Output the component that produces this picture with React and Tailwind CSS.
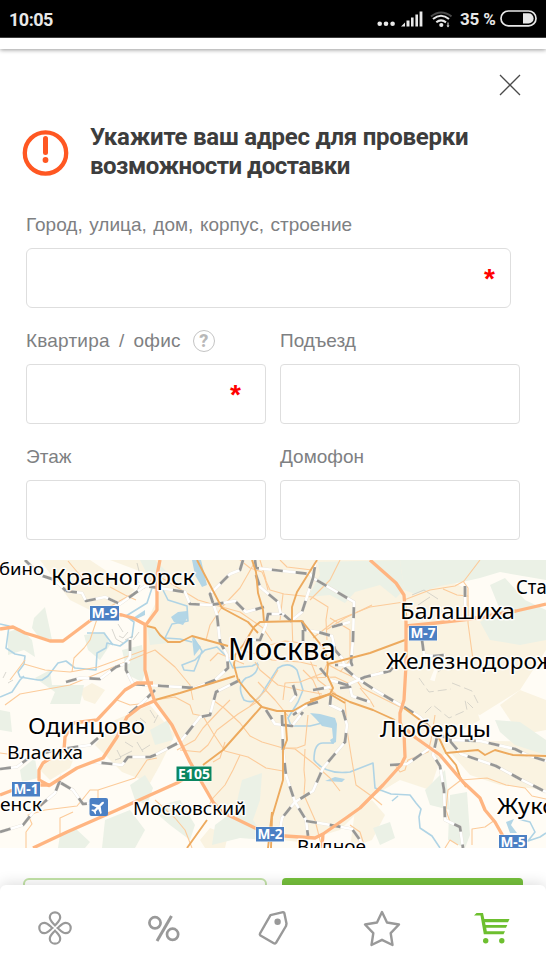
import React from "react";

const cityAreas = [
  "M110 560H405L440 575L468 590L472 640L440 655L430 680L470 690L480 720L462 730L440 760L430 790L400 780L375 795L340 830L300 842L262 838L240 825L215 805L195 775L180 745L158 705L148 690L145 625L157 600L150 575Z",
  "M40 560H90L135 590L100 615L70 600Z",
  "M450 610H546V650L520 690L480 715L430 700L440 660Z",
  "M95 745L115 720L150 705L175 735L160 765L150 783L122 772Z",
  "M440 740L546 742V790L500 785L470 775Z",
  "M80 690L92 683L105 690L95 704L84 700Z",
  "M500 705L520 690L546 700V730L520 735Z",
  "M355 810L372 800L385 815L372 840L350 848Z",
  "M200 840L210 828L228 835L225 848H205Z",
  "M38 768L52 760L75 755L70 768L50 780Z",
];

const greenAreas = [
  "M320 575L318 562L400 560L404 590L396 598L380 585L355 592L345 603L330 595L308 597Z",
  "M400 560H546V580L500 572L480 578L462 582L440 586L415 594L404 590Z",
  "M490 585L505 578L525 600L546 610V640L520 645L490 640L480 622L500 610Z",
  "M34 618L45 607L50 630L52 640L38 636L32 628Z",
  "M8 632L20 628L32 640L35 657L24 650L8 655Z",
  "M84 635L105 632L110 645L100 660L88 650Z",
  "M122 650L142 645L146 670L142 682L128 675Z",
  "M147 627L160 632L168 643L150 645Z",
  "M35 678L50 670L52 685L84 685L80 704H50L55 692Z",
  "M140 560H155L170 575L150 585L145 570Z",
  "M0 710L10 712L12 732L0 730Z",
  "M20 770L35 758L38 778L22 782Z",
  "M150 730L168 720L173 740L155 745Z",
  "M130 785L145 775L153 788L147 805L135 800Z",
  "M105 820L130 810L145 830L135 848H102Z",
  "M150 808L180 800L195 825L190 840L170 825Z",
  "M242 780L262 773L260 800L253 820L266 840L240 838L212 845L215 825L235 810Z",
  "M495 720L520 722L546 740V755L515 745L500 732Z",
  "M425 790L445 770L450 810L430 805Z",
  "M450 795L467 792L470 835L465 848L448 840Z",
  "M373 828L390 822L395 838L380 845Z",
  "M60 835L75 828L90 842L85 848H58Z",
];

const waterAreas = [
  "M192 560H201L207 585L202 587L195 575Z",
  "M171 617L178 612L187 611L188 617L183 625L174 622Z",
  "M192 638L201 647L194 656Z",
  "M130 620L145 610L145 615L132 621Z",
  "M310 713L320 714L335 718L337 724L336 742L332 744L330 740L333 738L332 728L322 726L316 719Z",
  "M325 781L335 777L345 779L342 782Z",
  "M506 822L514 819L511 825L517 833L510 833Z",
];

const rivers = [
  "M0 624L9 626L6 648L15 654L25 656L24 664L18 672L20 677L38 680L42 680L48 676L58 663L66 661L75 668L96 670L97 653L106 648L107 643L120 646L132 637L134 622L126 616L147 603L152 588L162 588L168 600L187 606L188 621L172 624L165 638L180 639L192 642",
  "M193 637L202 651L194 671L184 670L182 665L195 660L205 650L217 647L228 658L233 668L252 666L258 663",
  "M0 697L12 692L20 680L24 676M87 633H104L113 645",
  "M258 664Q258 675 246 678Q236 685 244 700Q256 706 264 690L278 668Q289 661 297 670L303 690L298 702L288 718L291 726L310 726L322 723",
  "M334 743L324 743Q314 742 314 760Q325 775 350 772L373 763L375 788L391 794L410 795L416 803L421 809L419 817L420 828L432 836L440 848",
  "M392 801L398 796M518 819L530 822L535 832L528 841L540 837L546 833",
];

const minorRoads = [
  "M5 705L20 694L70 685L140 656L155 650L175 667L190 685L193 700",
  "M10 680L25 660M24 664L45 670L70 672L98 667L145 650",
  "M72 672L74 658L84 648L90 640L99 613L130 595L146 587L155 575",
  "M110 587L125 595L136 600M68 561L84 580L100 583",
  "M157 575L198 600L222 607L240 588L256 560",
  "M206 640L210 625L222 607M222 607L240 612L263 628L272 641",
  "M240 560L250 568L262 572L270 590L284 594L312 597L328 607L326 620L327 640",
  "M283 594L280 620M264 575L268 590M340 560L330 580L310 600",
  "M260 560L266 580M292 621L293 650M313 638L335 621L370 607L404 602",
  "M280 560L287 567L312 570M326 630L345 618L372 605",
  "M155 700L175 697L190 705L193 714L203 716L213 733L225 751L248 757L266 768L283 771",
  "M213 700L224 708L240 723L250 736L262 742L283 748L295 749L313 763L330 778L340 791",
  "M177 750L195 740L203 728L220 710L230 700",
  "M180 750L200 752L208 745L217 730L238 714L260 700",
  "M240 755L233 770L225 785L213 798L208 807",
  "M255 662L260 670L278 685L300 690L322 694",
  "M240 650L260 655L272 660L300 662L317 666",
  "M270 645L285 641L310 644L318 655",
  "M258 682L275 700L288 716M250 706L266 690L278 670M303 670L313 680L321 698",
  "M283 700L285 683L300 682L323 673L327 664",
  "M327 664L338 670L355 678L362 688L380 697L400 707",
  "M340 672L350 660L350 630L330 618M310 678L335 677L350 684L380 672",
  "M360 688L370 700L374 707M336 694L318 680L310 660",
  "M345 700L347 730L351 755L356 785L370 795L382 805",
  "M305 749L304 770L305 780L304 795L315 820L322 848M283 748H297L305 745L308 715",
  "M395 765L400 772L405 770L408 760L428 752L431 740L435 715",
  "M404 600L430 590L455 586L464 581L480 560M443 589L457 595L468 596L468 588L463 581",
  "M468 596L468 623L473 660",
  "M461 780L487 778L506 785L525 788L532 796L546 799",
  "M461 780L448 790L446 810L450 822M445 848L450 840L458 845M472 845V829L485 827L495 820",
  "M26 848L26 832L32 824L28 815L45 810L77 806L82 800L90 790H98L135 778L147 760L157 758",
  "M60 834L60 818L73 812M98 790V800L108 812M155 800L175 818L185 830L192 848",
  "M0 753L15 755L28 750M117 700L130 705L148 703",
  "M225 742L220 758L213 762M350 825L360 832L365 848",
  "M210 661L218 653L244 664",
];

const secondaryRoads = [
  "M197 560L222 608L248 622L258 633",
  "M244 644L254 627L260 622L302 621L313 635L325 650L328 665L327 675L333 688L330 694L305 704L293 711L277 711L262 707L250 695L238 680L234 665L235 655L244 644",
  "M252 560L256 572L258 593L263 610L264 622",
  "M317 560L297 592L292 607L292 621",
  "M147 626L155 628L160 635L168 642H180L192 636L228 646",
  "M155 700L180 693L235 676",
  "M328 664L370 653L405 640",
  "M332 693L350 702L373 710L395 720",
  "M404 708L420 720L431 728L440 740L446 753L478 750L485 755L495 750L513 755L546 756",
  "M446 753L456 765L460 777L466 787",
  "M262 706L247 723L223 750L203 765",
  "M285 712L287 740L283 750L283 780L272 817L271 848",
  "M207 820L187 848M272 812L268 848",
  "M310 700L330 694L345 703",
];

const highways = [
  "M0 629L13 627L25 633L35 636L50 641H63L91 620L104 613L122 615L133 618L146 625",
  "M160 560L157 575V610L145 626V670L148 682L155 702L172 725L190 762L213 802L222 812L255 828L270 835L285 836L315 838L323 834L346 818L360 808L383 785L401 765L405 757L404 733L400 722V713L404 700L406 665V622L404 595L396 583L370 560",
  "M406 626L436 623L470 619L516 611L546 604",
  "M153 683H137L125 690L113 703L97 720L73 723L65 737L64 750L43 763L39 770V780L50 786",
  "M0 795L13 790L40 785H50L77 768L103 758L117 737L127 717L140 707L154 701",
  "M33 848L67 832L117 810L177 783L195 772",
  "M407 730L416 738L440 755L463 782L480 798L485 810L495 822L508 845",
  "M323 834L322 848",
];

const railways = [
  "M66 591L82 593L86 601L105 597L120 604L145 586L160 588L185 592L190 604L210 605L235 601L246 612L264 607",
  "M25 560L40 575L55 580L66 591",
  "M243 560L240 570L230 574L210 594L217 615L220 642L227 655L228 668L215 680L195 688L162 686L133 684L126 670V662L130 657V638",
  "M240 680L216 692L210 715L200 717L180 742L155 755L150 757H128L122 765L93 762",
  "M66 682L80 678L100 679L116 667L130 662",
  "M255 560L256 568L310 574L313 578L354 602L353 640L351 662L352 665L335 665",
  "M313 578L316 560M313 578L302 612L291 621L283 614H268L266 625L260 640L250 640",
  "M256 575L260 587L278 602L281 615",
  "M302 621L305 630L318 632L332 636L335 650L342 658L345 668L355 677L375 690L402 706",
  "M303 630V642M332 627L350 622M320 668L330 680L347 685L365 677L390 671L395 665",
  "M340 688L350 687L352 696L370 702M313 690L330 687M293 685L296 695L290 702",
  "M331 694L330 705L343 711L347 725L345 742L334 755L323 768L313 791L295 802L282 818L280 830",
  "M266 710L275 724L292 726L303 712M282 715L283 750L286 775L295 802L306 820L308 836",
  "M306 821L325 824L352 829L360 840L364 848",
  "M404 707L420 717L432 730L450 740L480 741L515 749L527 755L546 761M450 741L461 754L496 766L520 779L546 792",
  "M437 737L433 755L440 766L444 790L445 820L460 827L463 848",
  "M390 765L407 764L430 748M318 702L307 705L293 715",
  "M0 769L17 767L30 757L55 750L90 745L98 738",
  "M0 832L23 825L35 810L55 793L62 775M61 783L73 790L83 804L92 803",
  "M155 690L143 702L128 715M422 640L424 655L433 656L445 655M465 586V610",
];

const mapLabels = [
  { t: "бино", x: -1, y: 575, s: 17, w: 45 },
  { t: "Красногорск", x: 51, y: 584.5, s: 22, w: 144 },
  { t: "Москва", x: 228, y: 660, s: 30, w: 108 },
  { t: "Балашиха", x: 400, y: 619, s: 22, w: 115 },
  { t: "Железнодорожный", x: 386, y: 669, s: 22, w: 213 },
  { t: "Старая", x: 516, y: 594, s: 19, w: 63 },
  { t: "Одинцово", x: 28, y: 734, s: 22, w: 117 },
  { t: "Власиха", x: 7, y: 759, s: 18, w: 76 },
  { t: "енск", x: 0, y: 811, s: 18, w: 42 },
  { t: "Московский", x: 133, y: 815, s: 18, w: 113 },
  { t: "Люберцы", x: 380, y: 737, s: 22, w: 111 },
  { t: "Жуковский", x: 497, y: 814, s: 22, w: 126 },
  { t: "Видное", x: 297, y: 853, s: 18, w: 69 },
];

const roadShields = [
  { t: "М-9", x: 90, y: 606, w: 29 },
  { t: "М-7", x: 409, y: 626, w: 28 },
  { t: "М-1", x: 12, y: 782, w: 28 },
  { t: "М-2", x: 256, y: 827, w: 28 },
  { t: "М-5", x: 499, y: 835, w: 28 },
  { t: "E105", x: 176.5, y: 766.5, w: 35, green: true },
];

function Strokes({ paths, color, width, dash }) {
  return (
    <g fill="none" stroke={color} strokeWidth={width} strokeDasharray={dash} strokeLinejoin="round">
      {paths.map((d) => (
        <path key={d} d={d} />
      ))}
    </g>
  );
}

function CityMap() {
  return (
    <svg className="block h-[288px] w-full shrink-0" viewBox="0 560 546 288">
      <rect x="0" y="560" width="546" height="288" fill="#fffcf5" />
      <g fill="#faf3e1">{cityAreas.map((d) => <path key={d} d={d} />)}</g>
      <g fill="#ebf1e6">{greenAreas.map((d) => <path key={d} d={d} />)}</g>
      <g fill="#b3d6e6">{waterAreas.map((d) => <path key={d} d={d} />)}</g>
      <Strokes paths={rivers} color="#b0d4e5" width="1.6" />
      <g fill="none" stroke="#c9c7c0" strokeWidth="0.7">
        <path d="M112 629l4 10l7 4M118 624l5 8M128 632l-5 6l-4-2M125 640l8-4M133 640l6-8M135 575l4 8M140 585l-5 9M137 563l3 12M3 678l3-6M8 683l5-3" />
        <path d="M125 742l8 5M137 742l6 10M150 745l-8 5M117 750l4 8l-6 2M132 725l5-5M140 718l6 5M150 710l5 8M158 715l-4 8M120 757l12-6" />
        <path strokeDasharray="9 4" d="M419 678l10 14l22-3M438 672l15-11M452 683l20 8l6 12M425 713l8-8l16 13l18-8l-2-10l8 8" />
        <path d="M412 595l12-5l14 9M418 605l12-8" />
      </g>
      <Strokes paths={minorRoads} color="#fccb9a" width="1.1" />
      <Strokes paths={railways} color="#e7e2d9" width="3.2" />
      <Strokes paths={railways} color="#ffffff" width="2.5" />
      <Strokes paths={railways} color="#979795" width="2.7" dash="11 13" />
      <Strokes paths={secondaryRoads} color="#edaa5e" width="1.9" />
      <Strokes paths={highways} color="#ffb581" width="3.3" />
      <g fontFamily="'Noto Sans', sans-serif" fill="#000" stroke="#fff" strokeOpacity="0.85" strokeWidth="3" strokeLinejoin="round" style={{ paintOrder: "stroke" }}>
        {mapLabels.map((l) => (
          <text key={l.t} x={l.x} y={l.y} fontSize={l.s} textLength={l.w} lengthAdjust="spacingAndGlyphs">
            {l.t}
          </text>
        ))}
      </g>
      {roadShields.map((r) => (
        <g key={r.t}>
          <rect x={r.x - 0.5} y={r.y - 0.5} width={r.w + 1} height="15.5" fill="#fff" fillOpacity="0.8" />
          <rect x={r.x} y={r.y} width={r.w} height="14.5" fill={r.green ? "#0b8660" : "#4b80c4"} />
          <text x={r.x + 1.5} y={r.y + 12} fontSize="13.5" fontWeight="700" fill="#fff" fontFamily="'Noto Sans', sans-serif" textLength={r.w - 3} lengthAdjust="spacingAndGlyphs">
            {r.t}
          </text>
        </g>
      ))}
      <rect x="89.5" y="798" width="18.5" height="18" rx="2" fill="#4b80c4" />
      <path
        transform="translate(98.6 807) rotate(45) scale(.72)"
        fill="#fff"
        d="M0-10C1.3-10 1.6-8.5 1.6-7V-2.5L9 3V5L1.6 2.5V7L4 9V10.5L0 9.5L-4 10.5V9L-1.6 7V2.5L-9 5V3L-1.6-2.5V-7C-1.6-8.5-1.3-10 0-10Z"
      />
    </svg>
  );
}

function StatusBar() {
  return (
    <div className="flex h-[38px] shrink-0 items-center justify-between border-b border-[#444] bg-black pl-[9px] pr-[9px] text-[#e8e8e8]">
      <span className="mt-[2px] font-[Roboto] text-[18px] font-bold leading-none tracking-[-0.5px]">10:05</span>
      <div className="flex items-center">
        <svg className="h-[38px] w-[76px]" viewBox="376 0 76 38" fill="#e8e8e8">
          <circle cx="379.7" cy="23.8" r="2.3" />
          <circle cx="386" cy="23.8" r="2.3" />
          <circle cx="392.6" cy="23.8" r="2.3" />
          <path d="M401 26.5L405 22.5V26.5ZM406.5 20.5H409.5V26.5H406.5ZM411 17.5H413.6V26.5H411ZM415.4 14.5H418V26.5H415.4ZM419.6 11.5H422.4V26.5H419.6Z" />
          <g fill="none" strokeWidth="2.1">
            <path d="M431 16.5Q441 8.5 451.500 16.500" stroke="#4a4a4a" />
            <path d="M433 19Q441 12.500 449 19" stroke="#e8e8e8" />
            <path d="M436.300 22.300Q441 18.500 446 22.300" stroke="#e8e8e8" />
          </g>
          <circle cx="441.300" cy="25" r="2.100" />
          <path d="M447.500 22.500H448.500V25.500H449.500L448 27.500L446.500 25.500H447.500Z" />
        </svg>
        <span className="ml-[8px] mt-0.5 w-[37px] whitespace-nowrap font-[Roboto] text-[17px] font-bold leading-none tracking-[-0.2px]">35 %</span>
        <svg className="ml-[3px] h-[38px] w-[37px]" viewBox="500 0 37 38">
          <rect x="501" y="11" width="35" height="14.800" rx="7.400" fill="none" stroke="#e8e8e8" strokeWidth="1.700" />
          <path d="M523 13.300H528.500A5 5 0 0 1 528.500 23.500H523Z" fill="#e8e8e8" />
        </svg>
      </div>
    </div>
  );
}

function Field({ label, help, required, className, labelClass, boxClass }) {
  return (
    <label className={className}>
      <span className="flex h-8 items-center font-['Liberation_Sans'] text-[19px] leading-8 text-[#7e8082]">
        <span className={`mt-0.5 ${labelClass ?? ""}`}>{label}</span>
        {help && (
          <span className="ml-3 mt-px flex size-[22px] items-center justify-center rounded-full border-[1.5px] border-[#c4c4c4] font-[Roboto] text-[18px] font-extrabold leading-none text-[#b8b8b8]">?</span>
        )}
      </span>
      <span className={`mt-2 flex h-[60px] items-center justify-end border border-[#dedede] bg-white font-['Liberation_Sans'] text-[28px] font-bold leading-none text-[#f00] ${boxClass}`}>
        {required && <span className="mt-[2px]">*</span>}
      </span>
    </label>
  );
}

function NavBar() {
  return (
    <nav className="relative -mt-px grid h-[85px] shrink-0 grid-cols-5 place-items-center rounded-t-md bg-white text-[#999] shadow-[0_-2px_14px_rgba(0,0,0,0.13)]">
      <svg className="size-[40px]" viewBox="-20 -20 40 40" fill="none" stroke="currentColor" strokeWidth="2.2">
        {[0, 90, 180, 270].map((a) => (
          <path key={a} transform={`rotate(${a})`} d="M0-2.600C-2-5-5.200-7.300-5.200-10.700A5.200 5 0 0 1 5.200-10.700C5.200-7.300 2-5 0-2.600Z" />
        ))}
      </svg>
      <svg className="size-[40px]" viewBox="-20 -20 40 40" fill="none" stroke="currentColor" strokeWidth="2.700">
        <circle cx="-9" cy="-5.200" r="5.600" />
        <circle cx="8.600" cy="6.300" r="5.600" />
        <path d="M7.500-12L-7 13" strokeWidth="3" />
      </svg>
      <svg className="size-[40px]" viewBox="-20 -20 40 40" fill="none" stroke="currentColor" strokeWidth="2.400" strokeLinejoin="round">
        <path d="M-2.500-12.800L10-15.800Q11-15.900 11.300-15L13.500-4.500L13-2L3 14.800Q2 16 .8 15.300L-12.500 7.500Q-13.600 6.500-13 5.500Z" />
        <circle cx="4.600" cy="-6.300" r="3.200" fill="currentColor" stroke="none" />
      </svg>
      <svg className="size-[40px]" viewBox="-20 -20 40 40" fill="none" stroke="currentColor" strokeWidth="2.400" strokeLinejoin="round">
        <path d="M0-16L5-5.500L17-3.500L8.700 5.200L10.500 17L0 11.800L-10.500 17L-8.700 5.200L-17-3.500L-5-5.500Z" />
      </svg>
      <svg className="size-[40px] text-[#6dbf2f]" viewBox="-20 -20 40 40" fill="currentColor">
        <path
          fillRule="evenodd"
          d="M-17-12.500L-14.500-15H-8L-6.700-9H18.500L17-5.800H-6L-5.400-3H16.300L15-.2H-4.800L-4.200 3.300H14L12.500 6.200H-7.200L-10.500-12.500Z"
        />
        <circle cx="-5.300" cy="12.800" r="2.700" />
        <circle cx="10.800" cy="12.800" r="2.700" />
      </svg>
    </nav>
  );
}

export default function App() {
  return (
    <div className="flex h-[970px] w-[546px] flex-col overflow-hidden bg-white">
      <StatusBar />
      <div className="h-[11px] shrink-0 bg-white shadow-[0_1px_4px_rgba(0,0,0,0.4)]" />
      <main className="flex h-[837px] shrink-0 flex-col overflow-hidden">
        <div className="flex h-[74px] shrink-0 justify-end pr-[25px] pt-[25px]">
          <svg className="size-[22px]" viewBox="0 0 22 22" stroke="#4a4a4a" strokeWidth="1.300">
            <path d="M1 1L21 21M21 1L1 21" />
          </svg>
        </div>
        <div className="flex h-[85px] shrink-0 pl-[22px]">
          <svg className="mt-[7px] size-[47px]" viewBox="0 0 47 47">
            <circle cx="23.500" cy="23" r="20.700" fill="none" stroke="#ff5722" strokeWidth="4.300" />
            <path d="M23.500 8.500V22.500" stroke="#ff5722" strokeWidth="5" strokeLinecap="round" />
            <circle cx="23.500" cy="30" r="2.900" fill="#ff5722" />
          </svg>
          <h1 className="ml-[21px] whitespace-nowrap font-[Roboto] text-[24px] font-bold leading-[29px] text-[#3d3d3d]">
            <span className="block tracking-[-0.25px]">Укажите ваш адрес для проверки</span>
            <span className="block tracking-[-0.5px]">возможности доставки</span>
          </h1>
        </div>
        <div className="grid h-[352px] shrink-0 grid-cols-[240px_240px] content-start gap-x-[14px] gap-y-4 pl-[26px]">
          <Field
            label="Город, улица, дом, корпус, строение"
            required
            className="col-span-2 w-[485px]"
            labelClass="[word-spacing:1.3px]"
            boxClass="rounded-md pr-[15px]"
          />
          <Field label="Квартира / офис" help required labelClass="tracking-[0.2px] [word-spacing:3.7px]" boxClass="rounded pr-[24px]" />
          <Field label="Подъезд" boxClass="rounded" />
          <Field label="Этаж" boxClass="rounded" />
          <Field label="Домофон" boxClass="rounded" />
        </div>
        <CityMap />
        <div className="mt-[30px] flex shrink-0 gap-[15px] pl-[23px]">
          <div className="h-[60px] w-[244px] rounded-md border-2 border-[#c3e3a8]" />
          <div className="h-[60px] w-[241px] rounded bg-[#75c03c]" />
        </div>
      </main>
      <NavBar />
    </div>
  );
}
